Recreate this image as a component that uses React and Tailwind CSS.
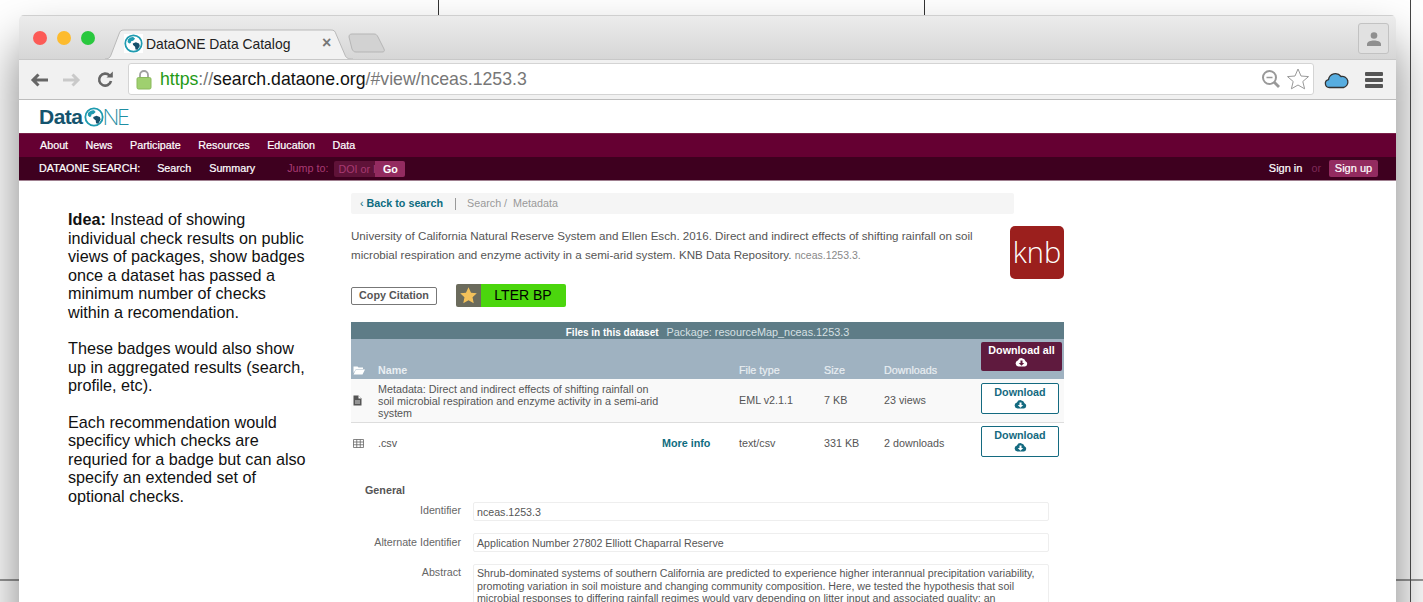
import React from "react";

const Globe = ({ s = 18, ocean = "#1f9bb0", land = "#16506b" }) => (
  <svg width={s} height={s} viewBox="0 0 24 24" className="shrink-0">
    <circle cx="12" cy="12" r="10.4" fill="#fff" stroke={ocean} strokeWidth="2.2" />
    <path d="M5 7c2-2.5 5-3.5 7-3l2 2-2.500 2.500-2.500.5-.5 2.500-2 .5L4.500 10z" fill={ocean} />
    <path d="M11 12l4-1.500 4 1.500 1 3-3 5-2.500-.5-.5-3.500-2.500-2z" fill={land} />
  </svg>
);

const CloudDl = ({ c = "#fff", a = "#fff" }) => (
  <svg width="13" height="10" viewBox="0 0 26 20" className="mx-auto">
    <path d="M7 19a6 6 0 0 1-1.200-11.800A8 8 0 0 1 21 8.500 5.500 5.500 0 0 1 20 19z" fill={c} />
    <path d="M11 7h4v5h3.500L13 17.500 7.500 12H11z" fill={a} />
  </svg>
);

const TR = "grid grid-cols-[27px_321px_40px_85px_60px_97px_1fr]";

function Row({ icon, name, more, type, size, dl, cls, btn }) {
  return (
    <div className={`${TR} items-center text-[10.75px] text-[#555] ${cls}`}>
      <div className="pl-[2px] flex justify-start">{icon}</div>
      <div className="leading-[12px] pr-[36px]">{name}</div>
      <div className="-ml-[37px] font-bold text-[#0e6c80] whitespace-nowrap">{more}</div>
      <div>{type}</div>
      <div>{size}</div>
      <div className="whitespace-nowrap">{dl}</div>
      <div className={`self-start ${btn}`}>
        <div className="w-[78px] h-[31px] rounded-[2px] border-[1.5px] border-[#146a80] bg-white text-center font-bold text-[#146a80] leading-[12px] pt-[2px]">
          Download
          <div className="mt-[1px]"><CloudDl c="#146a80" /></div>
        </div>
      </div>
    </div>
  );
}

function Field({ label, value, h = "h-[19px]", top, pad = "pt-[2.5px]" }) {
  return (
    <div className="flex">
      <div className={`w-[110px] text-right text-[10.7px] text-[#666] leading-[14px] ${top}`}>{label}</div>
      <div className={`ml-[12px] w-[576px] ${h} border border-[#eeeeee] rounded-[2px] px-[3px] text-[10.65px] text-[#555] leading-[12.5px] ${pad} overflow-hidden`}>
        {value}
      </div>
    </div>
  );
}

export default function App() {
  return (
    <div className="relative w-[1423px] h-[602px] overflow-hidden bg-white font-['Liberation_Sans',Arial,sans-serif]">
      <div className="absolute left-[438px] top-0 w-px h-[15px] bg-[#333]" />
      <div className="absolute left-[924px] top-0 w-px h-[15px] bg-[#333]" />
      <div className="absolute left-0 top-[579px] w-[1423px] h-[2px] bg-[#999]" />

      <div className="absolute left-[19px] top-[15px] w-[1377px] h-[620px] rounded-t-[5px] bg-white shadow-[0_30px_50px_rgba(0,0,0,0.5)] flex flex-col overflow-hidden">
        {/* tab strip */}
        <div className="relative h-[44px] shrink-0 bg-gradient-to-b from-[#ececec] to-[#d6d6d6] border-t border-[#cfcfcf] flex items-start">
          <div className="flex gap-[10px] pl-[14px] pt-[15px]">
            <span className="size-[14px] rounded-full bg-[#fc5b57]" />
            <span className="size-[14px] rounded-full bg-[#fdbb2e]" />
            <span className="size-[14px] rounded-full bg-[#29c83e]" />
          </div>
          <div className="ml-[10px] mt-[13px] w-[250px] h-[30px] relative shrink-0">
            <svg className="absolute inset-0" width="250" height="30" viewBox="0 0 250 30">
              <path d="M0 30c3 0 5-1 6-4L14 5c1-3 2-4 5-4h207c3 0 4 1 5 4l9 21c1 3 3 4 8 4" fill="#f2f2f2" stroke="#b9b9b9" />
            </svg>
            <div className="absolute left-[19px] top-[5px] flex items-center gap-[3px]">
              <span className="bg-white"><Globe s={19} /></span>
              <span className="text-[13.9px] text-[#222] leading-[18px] whitespace-nowrap">DataONE Data Catalog</span>
            </div>
            <span className="absolute left-[217px] top-[5px] text-[16px] leading-[18px] font-bold text-[#777]">×</span>
          </div>
          <div className="-ml-[7px] mt-[17px] w-[38px] h-[20px] shrink-0">
            <svg width="38" height="20" viewBox="0 0 38 20">
              <path d="M1 4c0-2 1-3 3-3h22c2 0 3 1 4 3l6 12c1 2 0 3-2 3H8c-2 0-3-1-4-3z" fill="#d2d2d2" stroke="#b5b5b5" />
            </svg>
          </div>
          <div className="ml-auto mr-[7px] mt-[7px] w-[31px] h-[31px] rounded-[3px] border border-[#c2c2c2] bg-[#e1e1e1] flex items-center justify-center">
            <svg width="16" height="16" viewBox="0 0 16 16">
              <circle cx="8" cy="4.5" r="3.3" fill="#8f8f8f" />
              <path d="M1 15v-2c0-2.500 4-3.500 7-3.500s7 1 7 3.500v2z" fill="#8f8f8f" />
            </svg>
          </div>
        </div>

        {/* address bar */}
        <div className="h-[41px] shrink-0 bg-[#f1f1f1] border-y border-[#bdbdbd] border-t-[#c8c8c8] flex items-center">
          <div className="w-[109px] shrink-0 flex items-center pl-[10px]">
            <svg width="20" height="16" viewBox="0 0 20 16"><path d="M19 8H5M9.500 2.500 4 8l5.500 5.500" fill="none" stroke="#666" strokeWidth="3" /></svg>
            <svg width="20" height="16" viewBox="0 0 20 16" className="ml-[13px]"><path d="M1 8h14M10.500 2.500 16 8l-5.500 5.500" fill="none" stroke="#c9c9c9" strokeWidth="3" /></svg>
            <svg width="17" height="17" viewBox="0 0 17 17" className="ml-[15px]"><path d="M14 10a6 6 0 1 1-1.500-5.500" fill="none" stroke="#666" strokeWidth="2.6" /><path d="M9.500 6.500H15.800V.5z" fill="#666" /></svg>
          </div>
          <div className="w-[1186px] shrink-0 h-[32px] -mt-[1px] rounded-[3px] bg-white border border-[#d4d4d4] flex items-center relative">
            <svg width="16" height="21" viewBox="0 0 16 21" className="ml-[7px] shrink-0">
              <path d="M4 9V6a4 4 0 0 1 8 0v3" fill="none" stroke="#a0a0a0" strokeWidth="1.8" />
              <rect x="1" y="8.5" width="14" height="11.5" rx="1.5" fill="#9fd06f" stroke="#8ab95c" />
            </svg>
            <span className="ml-[8px] text-[17.7px] whitespace-nowrap leading-[20px] text-[#777]">
              <span className="text-[#1f9a16]">https</span>
              <span>://</span>
              <span className="text-[#111]">search.dataone.org</span>
              <span>/#view/nceas.1253.3</span>
            </span>
            <svg width="20" height="20" viewBox="0 0 20 20" className="absolute right-[32px] top-[5px]">
              <circle cx="8.5" cy="8.5" r="6.5" fill="none" stroke="#999" strokeWidth="2" />
              <path d="M13 13l5 5" stroke="#999" strokeWidth="2.8" />
              <path d="M5.500 8.500h6" stroke="#999" strokeWidth="1.5" />
            </svg>
            <svg width="24" height="24" viewBox="0 0 24 24" className="absolute right-[3px] top-[3px]">
              <path d="M12 2l3 7 7.500.6-5.700 4.900 1.800 7.300L12 18l-6.600 3.800 1.800-7.300L1.500 9.600 9 9z" fill="#fff" stroke="#999" strokeWidth="1" />
            </svg>
          </div>
          <svg width="25" height="18" viewBox="0 0 25 18" className="ml-[10px] shrink-0">
            <path d="M5.500 16.500a4 4 0 0 1-1-7.900A7 7 0 0 1 17 5.500a5.500 5.500 0 0 1 2.500 11z" fill="#57ade0" stroke="#333" strokeWidth="1.3" />
          </svg>
          <div className="ml-[16px] flex flex-col gap-[2px]">
            <span className="w-[18px] h-[4px] rounded-[1px] bg-[#555]" />
            <span className="w-[18px] h-[4px] rounded-[1px] bg-[#555]" />
            <span className="w-[18px] h-[4px] rounded-[1px] bg-[#555]" />
          </div>
        </div>

        {/* logo */}
        <div className="h-[33px] shrink-0 bg-white pl-[20px] flex items-center">
          <span className="font-bold text-[21px] leading-[22px] tracking-[-0.5px] text-[#15546e]">Data</span>
          <span className="ml-[1px]"><Globe s={20} /></span>
          <span className="text-[22px] leading-[22px] font-['Inter',sans-serif] font-extralight text-[#1f8ea3] tracking-[-2.5px] -ml-[1px]">NE</span>
        </div>

        {/* nav */}
        <div className="shrink-0 bg-[#650032] border-t border-[#7a2048] h-[24px] flex items-center">
          <div className="flex gap-[17.5px] pl-[21px] text-[10.75px] text-white [-webkit-text-stroke:0.2px_white]">
            <span>About</span><span>News</span><span>Participate</span><span>Resources</span><span>Education</span><span>Data</span>
          </div>
        </div>
        <div className="shrink-0 bg-[#3e001f] border-b border-[#a08090] h-[24px] flex items-center text-[10.75px] text-white">
          <span className="ml-[20px] [-webkit-text-stroke:0.2px_white]">DATAONE SEARCH:</span>
          <span className="ml-[17px] [-webkit-text-stroke:0.2px_white]">Search</span>
          <span className="ml-[18px] [-webkit-text-stroke:0.2px_white]">Summary</span>
          <span className="ml-[32px] text-[#a83a72]">Jump to:</span>
          <div className="ml-[6px] h-[16px] flex rounded-[2px] overflow-hidden">
            <span className="w-[41px] bg-[#5f1238] text-[#a83a72] pl-[4px] leading-[16px] whitespace-nowrap overflow-hidden">DOI or ID</span>
            <span className="w-[30px] bg-[#932b60] text-center font-bold leading-[16px]">Go</span>
          </div>
          <span className="ml-auto text-[11px] [-webkit-text-stroke:0.2px_white]">Sign in</span>
          <span className="ml-[9px] text-[#7f2a58]">or</span>
          <span className="ml-[8px] mr-[18px] w-[49px] h-[17px] rounded-[2px] bg-[#932b60] text-center leading-[17px] text-[11px] [-webkit-text-stroke:0.2px_white]">Sign up</span>
        </div>

        {/* content */}
        <div className="flex-1 flex min-h-0">
          <div className="w-[332px] shrink-0 pl-[49px] pt-[29px] pr-[16px] text-[16.2px] leading-[18.5px] text-[#111]">
            <p className="w-[240px]"><b>Idea:</b> Instead of showing individual check results on public views of packages, show badges once a dataset has passed a minimum number of checks within a recomendation.</p>
            <p className="mt-[18px] w-[240px]">These badges would also show up in aggregated results (search, profile, etc).</p>
            <p className="mt-[18px] w-[240px]">Each recommendation would specificy which checks are requried for a badge but can also specify an extended set of optional checks.</p>
          </div>
          <div className="w-[713px] shrink-0 pt-[12px]">
            <div className="w-[663px] h-[21px] rounded-[2px] bg-[#f5f5f5] flex items-center text-[10.75px] pl-[9px]">
              <span className="text-[#0e6c80]">‹ <b>Back to search</b></span>
              <span className="ml-[12px] mr-[11px] w-px h-[12px] bg-[#999]" />
              <span className="text-[#999]">Search /&nbsp; Metadata</span>
            </div>
            <div className="mt-[12px] flex justify-between">
              <p className="w-[635px] text-[11.6px] leading-[19px] text-[#555]">
                University of California Natural Reserve System and Ellen Esch. 2016. Direct and indirect effects of shifting rainfall on soil microbial respiration and enzyme activity in a semi-arid system. KNB Data Repository. <span className="text-[10.5px] text-[#888]">nceas.1253.3.</span>
              </p>
              <div className="w-[54px] h-[53px] rounded-[5px] bg-[#9b1f1d] text-white text-[29px] leading-[51px] text-center font-light font-['Open_Sans',sans-serif]">knb</div>
            </div>
            <div className="mt-[5px] flex items-center">
              <div className="w-[86px] h-[18px] rounded-[2px] border-[1.5px] border-[#777] text-center text-[10.75px] leading-[15px] font-bold text-[#555]">Copy Citation</div>
              <div className="ml-[19px] h-[23px] w-[110px] flex rounded-[2px] overflow-hidden">
                <div className="w-[25px] bg-[#6b6b5c] flex items-center justify-center">
                  <svg width="19" height="19" viewBox="0 0 24 24"><path d="M12 1.500l3.200 7 7.300.8-5.400 5 1.500 7.500L12 18l-6.600 3.800 1.500-7.500-5.400-5 7.300-.8z" fill="#f3c15a" /></svg>
                </div>
                <div className="flex-1 bg-[#4bd60d] text-black text-center text-[14px] leading-[23px] pr-[1px]">LTER BP</div>
              </div>
            </div>
            {/* table */}
            <div className="mt-[15px] w-[713px]">
              <div className="h-[17px] bg-[#5e7c87] text-center leading-[17px] whitespace-nowrap">
                <b className="text-white text-[10px]">Files in this dataset</b>
                <span className="ml-[8px] text-[10.85px] text-[#d6e0e4]">Package: resourceMap_nceas.1253.3</span>
              </div>
              <div className={`${TR} h-[40px] bg-[#9fb2c1] text-[10.75px] font-bold text-[#e9eef2] items-end relative`}>
                <div className="pl-[2px] pb-[4px]">
                  <svg width="12" height="10" viewBox="0 0 24 20"><path d="M1 3h8l2 2h9v3H6L1 16zM6 9h18l-5 10H1z" fill="#fff" /></svg>
                </div>
                <div className="pb-[1px]">Name</div>
                <div />
                <div className="pb-[1px] font-normal [-webkit-text-stroke:0.2px_#e9eef2]">File type</div>
                <div className="pb-[1px] font-normal [-webkit-text-stroke:0.2px_#e9eef2]">Size</div>
                <div className="pb-[1px] font-normal [-webkit-text-stroke:0.2px_#e9eef2]">Downloads</div>
                <div className="self-start mt-[3px] w-[81px] h-[29px] rounded-[2px] bg-[#5f1a3e] text-white text-center leading-[13px] pt-[2px]">
                  Download all
                  <CloudDl c="#fff" a="#5f1a3e" />
                </div>
              </div>
              <Row
                cls="h-[44px] bg-[#f9f9f9] border-b border-[#dddddd]"
                btn="mt-[4px]"
                icon={<svg width="9" height="11" viewBox="0 0 18 22"><path d="M1 1h10l6 6v14H1z" fill="#555" /><path d="M11 1v6h6" fill="#fff" /><path d="M4 12h10M4 16h10" stroke="#fff" strokeWidth="1.5" /></svg>}
                name="Metadata: Direct and indirect effects of shifting rainfall on soil microbial respiration and enzyme activity in a semi-arid system"
                type="EML v2.1.1"
                size="7 KB"
                dl="23 views"
              />
              <Row
                cls="h-[40px] bg-white"
                btn="mt-[3px]"
                icon={<svg width="11" height="9" viewBox="0 0 22 18"><path d="M1 1h20v16H1zM1 6h20M1 11.500h20M7.500 1v16M14.500 1v16" fill="none" stroke="#666" strokeWidth="1.6" /></svg>}
                name=".csv"
                more="More info"
                type="text/csv"
                size="331 KB"
                dl="2 downloads"
              />
            </div>
            {/* general */}
            <div className="mt-[21px] pl-[14px] text-[10.75px] font-bold text-[#555] leading-[12px]">General</div>
            <div className="mt-[6px] flex flex-col gap-[12px]">
              <Field label="Identifier" value="nceas.1253.3" top="pt-[1px]" />
              <Field label="Alternate Identifier" value="Application Number 27802 Elliott Chaparral Reserve" top="pt-[2px]" />
              <Field
                label="Abstract"
                top="pt-[1px]"
                h="h-[80px]"
                pad="pt-[2px]"
                value="Shrub-dominated systems of southern California are predicted to experience higher interannual precipitation variability, promoting variation in soil moisture and changing community composition. Here, we tested the hypothesis that soil microbial responses to differing rainfall regimes would vary depending on litter input and associated quality; an"
              />
            </div>
          </div>
        </div>
      </div>
      <div className="absolute left-[1410px] top-0 w-px h-[602px] bg-[#444]" />
    </div>
  );
}
